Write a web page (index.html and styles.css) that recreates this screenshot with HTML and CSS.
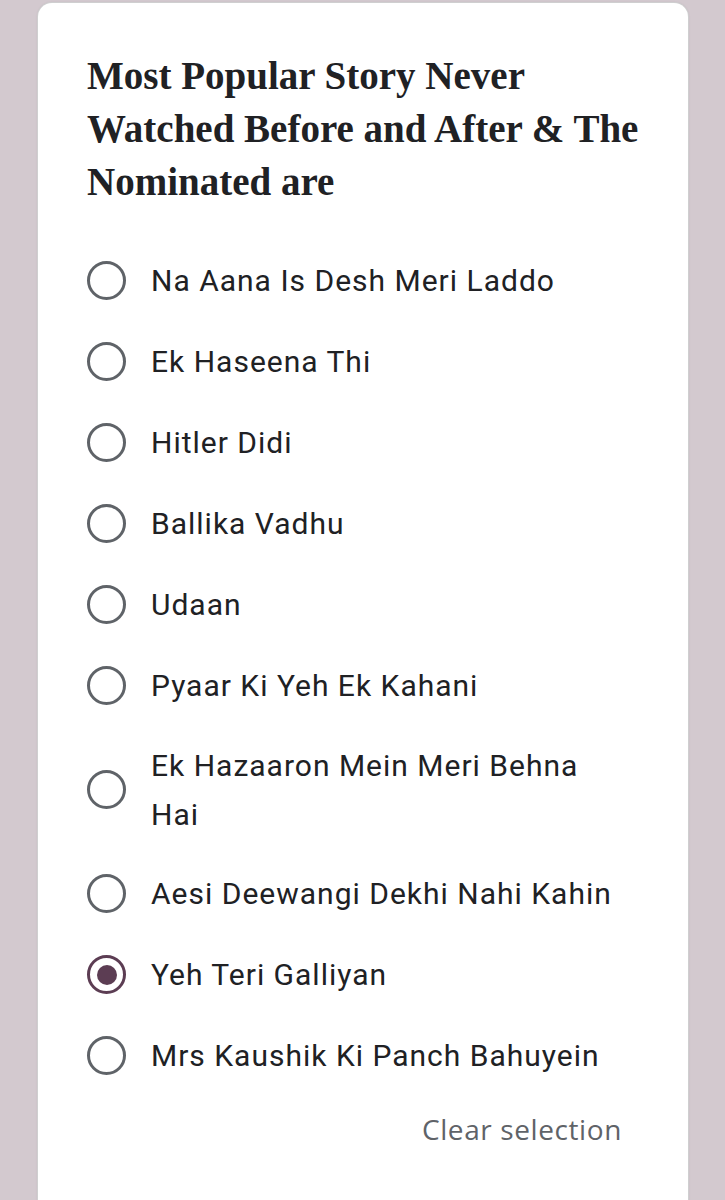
FILE: index.html
```html
<!DOCTYPE html>
<html>
<head>
<meta charset="utf-8">
<link rel="stylesheet" href="styles.css">
</head>
<body>
<div class="card">
  <h1 class="title">Most Popular Story Never Watched Before and After &amp; The Nominated are</h1>
  <div class="options">
    <div class="opt"><span class="radio"></span><span class="label">Na Aana Is Desh Meri Laddo</span></div>
    <div class="opt"><span class="radio"></span><span class="label">Ek Haseena Thi</span></div>
    <div class="opt"><span class="radio"></span><span class="label">Hitler Didi</span></div>
    <div class="opt"><span class="radio"></span><span class="label">Ballika Vadhu</span></div>
    <div class="opt"><span class="radio"></span><span class="label">Udaan</span></div>
    <div class="opt"><span class="radio"></span><span class="label">Pyaar Ki Yeh Ek Kahani</span></div>
    <div class="opt tall"><span class="radio"></span><span class="label">Ek Hazaaron Mein Meri Behna Hai</span></div>
    <div class="opt"><span class="radio"></span><span class="label">Aesi Deewangi Dekhi Nahi Kahin</span></div>
    <div class="opt"><span class="radio checked"></span><span class="label">Yeh Teri Galliyan</span></div>
    <div class="opt"><span class="radio"></span><span class="label">Mrs Kaushik Ki Panch Bahuyein</span></div>
  </div>
  <div class="clear-row"><span class="clear">Clear selection</span></div>
</div>
</body>
</html>
```
FILE: styles.css
```css
html, body {
  margin: 0;
  padding: 0;
  background: #d3c9cf;
}
body {
  width: 725px;
  height: 1200px;
  overflow: hidden;
}
.card {
  margin: 3px 0 0 38px;
  width: 650px;
  height: 1260px;
  box-sizing: border-box;
  background: #fff;
  border-radius: 14px;
  box-shadow: 0 0 0 1px #cfcfd0, 0 0 3px rgba(0,0,0,0.12);
  padding: 46px 20px 0 49px;
}
.title {
  margin: 0;
  max-width: 570px;
  font-family: "Liberation Serif", "DejaVu Serif", serif;
  font-weight: bold;
  font-size: 39px;
  line-height: 53px;
  color: #202124;
  letter-spacing: 0;
}
.options {
  margin-top: 32px;
  display: flex;
  flex-direction: column;
}
.opt {
  display: flex;
  align-items: center;
  height: 81px;
}
.opt.tall {
  height: 127px;
}
.radio {
  flex: none;
  width: 33px;
  height: 33px;
  border: 3.5px solid #5f6368;
  border-radius: 50%;
  margin-left: 0;
  margin-right: 25px;
  position: relative;
}
.radio.checked {
  border-color: #5c3d53;
}
.radio.checked::after {
  content: "";
  position: absolute;
  left: 50%;
  top: 50%;
  width: 20px;
  height: 20px;
  margin: -10px 0 0 -10px;
  border-radius: 50%;
  background: #5c3d53;
}
.label {
  font-family: Roboto, "Liberation Sans", sans-serif;
  font-size: 30px;
  letter-spacing: 1px;
  line-height: 49px;
  color: #202124;
  max-width: 468px;
}
.clear-row {
  display: flex;
  justify-content: flex-end;
  padding-right: 46px;
  margin-top: 14px;
}
.clear {
  font-family: "Open Sans", Roboto, sans-serif;
  font-size: 28px;
  font-weight: 500;
  letter-spacing: 0.6px;
  color: #5f6368;
}
```
